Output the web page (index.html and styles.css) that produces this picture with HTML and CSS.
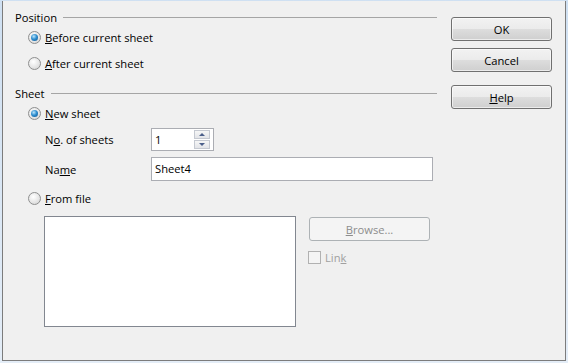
FILE: index.html
```html
<!DOCTYPE html>
<html lang="en">
<head>
    <meta charset="UTF-8">
    <title>Insert Sheet</title>
    <link rel="stylesheet" href="styles.css">
</head>
<body>
    <div class="dialog">
        <div class="main">
            <div class="section-head"><span>Position</span><div class="rule"></div></div>
            <div class="row first">
                <span class="radio checked"></span>
                <span><u>B</u>efore current sheet</span>
            </div>
            <div class="row second">
                <span class="radio"></span>
                <span><u>A</u>fter current sheet</span>
            </div>

            <div class="section-head sheet"><span>Sheet</span><div class="rule"></div></div>
            <div class="row new">
                <span class="radio checked"></span>
                <span><u>N</u>ew sheet</span>
            </div>
            <div class="field count">
                <label>N<u>o</u>. of sheets</label>
                <div class="spin">
                    <span class="spin-value">1</span>
                    <div class="spin-btns">
                        <span class="spin-btn up"></span>
                        <span class="spin-btn down"></span>
                    </div>
                </div>
            </div>
            <div class="field name">
                <label>Na<u>m</u>e</label>
                <div class="textbox">Sheet4</div>
            </div>
            <div class="row from">
                <span class="radio"></span>
                <span><u>F</u>rom file</span>
            </div>
            <div class="file-area">
                <div class="file-list"></div>
                <div class="file-side">
                    <div class="btn disabled"><span><u>B</u>rowse...</span></div>
                    <div class="check-row">
                        <span class="checkbox"></span>
                        <span class="muted">Lin<u>k</u></span>
                    </div>
                </div>
            </div>
        </div>

        <div class="buttons">
            <div class="btn">OK</div>
            <div class="btn">Cancel</div>
            <div class="btn help"><span><u>H</u>elp</span></div>
        </div>
    </div>
</body>
</html>
```

FILE: styles.css
```css
body {
    margin: 0;
    background: linear-gradient(#cfe0f2, #e4edf7);
    font-family: "Open Sans", "Noto Sans", sans-serif;
    font-size: 11.2px;
    color: #000;
    height: 363px;
    overflow: hidden;
}
u {
    text-decoration-thickness: 1px;
    text-underline-offset: 1px;
}
.dialog {
    margin: 1px 0 0 2px;
    width: 562px;
    height: 359px;
    background-color: #f0f0f0;
    border-left: 1px solid #7c7c7c;
    border-right: 1px solid #7c7c7c;
    border-bottom: 1px solid #7c7c7c;
    display: flex;
}
.main {
    width: 422px;
    padding-left: 12px;
}
.section-head {
    margin-top: 8px;
    height: 16px;
    display: flex;
    align-items: center;
}
.section-head .rule {
    flex: 1;
    height: 1px;
    margin-left: 6px;
    background-color: #a5a5a5;
}
.row {
    margin-left: 13px;
    height: 24px;
    display: flex;
    align-items: center;
    gap: 4px;
}
.row.second {
    height: 28px;
}
.row.from {
    margin-top: 5px;
}
.radio {
    width: 11px;
    height: 11px;
    border: 1px solid #8e8f8f;
    border-radius: 50%;
    background: radial-gradient(circle at 40% 35%, #ffffff, #e6e6e6 55%, #cfcfcf);
    display: flex;
    align-items: center;
    justify-content: center;
}
.radio.checked::after {
    content: "";
    width: 7px;
    height: 7px;
    border-radius: 50%;
    background: radial-gradient(circle at 40% 35%, #bfe6fb, #2f8fd0 45%, #0c4f8c);
}
.field {
    margin-left: 30px;
    display: flex;
    align-items: center;
}
.field label {
    width: 106px;
}
.field.count {
    margin-top: 2px;
    height: 24px;
}
.field.name {
    margin-top: 6px;
    height: 24px;
}
.spin {
    width: 61px;
    height: 21px;
    background-color: #fff;
    border: 1px solid #abadb3;
    display: flex;
    align-items: center;
    justify-content: space-between;
}
.spin-value {
    padding-left: 3px;
}
.spin-btns {
    margin-right: 3px;
    display: flex;
    flex-direction: column;
    gap: 1px;
}
.spin-btn {
    width: 14px;
    height: 7px;
    border: 1px solid #c5c9d1;
    background: linear-gradient(#f6f6f6, #e2e4e8);
    display: flex;
    align-items: center;
    justify-content: center;
}
.spin-btn::after {
    content: "";
    border-left: 3px solid transparent;
    border-right: 3px solid transparent;
}
.spin-btn.up::after {
    border-bottom: 3px solid #4b5f8a;
}
.spin-btn.down::after {
    border-top: 3px solid #4b5f8a;
}
.textbox {
    width: 277px;
    height: 22px;
    line-height: 22px;
    padding-left: 3px;
    background-color: #fff;
    border: 1px solid #abadb3;
}
.file-area {
    margin-top: 6px;
    margin-left: 29px;
    display: flex;
}
.file-list {
    width: 250px;
    height: 109px;
    background-color: #fff;
    border: 1px solid #828790;
}
.file-side {
    margin-left: 12px;
    display: flex;
    flex-direction: column;
}
.file-side .btn {
    margin-left: 1px;
    margin-top: 1px;
    width: 119px;
}
.btn {
    width: 99px;
    height: 22px;
    border: 1px solid #707070;
    border-radius: 3px;
    background: linear-gradient(#f2f2f2 0%, #ebebeb 50%, #dddddd 51%, #cfcfcf 100%);
    display: flex;
    align-items: center;
    justify-content: center;
    box-shadow: inset 0 0 0 1px rgba(255, 255, 255, 0.6);
}
.btn.disabled {
    border-color: #adb2b5;
    background: #f4f4f4;
    color: #8d8d8d;
    box-shadow: none;
}
.check-row {
    margin-top: 9px;
    display: flex;
    align-items: center;
    gap: 4px;
}
.checkbox {
    width: 11px;
    height: 11px;
    border: 1px solid #b1b1b1;
    background-color: #f4f4f4;
}
.muted {
    color: #a0a0a0;
}
.buttons {
    margin-left: 14px;
    padding-top: 16px;
    display: flex;
    flex-direction: column;
}
.buttons .btn + .btn {
    margin-top: 7px;
}
.buttons .btn.help {
    margin-top: 13px;
}
```
